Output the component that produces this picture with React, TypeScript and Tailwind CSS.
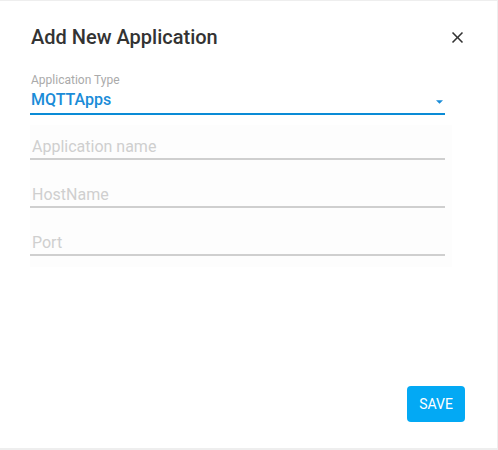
import React from "react";

const fields = ["Application name", "HostName", "Port"];

export default function App() {
  return (
    <div className="h-[450px] w-[498px] bg-[#eeeeee] pt-px font-['Roboto',sans-serif]">
      <div className="flex h-[447px] w-[497px] flex-col bg-white">
        {/* header */}
        <div className="flex items-center justify-between pl-[31px] pr-[30px] pt-[22px]">
          <h2 className="text-[20px] font-medium leading-[28px] text-[#333333]">Add New Application</h2>
          <svg viewBox="0 0 24 24" className="h-[19px] w-[19px] fill-[#333333]">
            <path d="M19 6.41L17.59 5 12 10.59 6.41 5 5 6.41 10.59 12 5 17.59 6.41 19 12 13.41 17.59 19 19 17.59 13.41 12z" />
          </svg>
        </div>

        {/* select */}
        <div className="ml-[30px] mt-[22px] w-[415px] border-b-2 border-[#0a8bd6] pb-[3px]">
          <div className="pl-px text-[12px] leading-[14px] text-[#aaaaaa]">Application Type</div>
          <div className="mt-[3px] flex h-[20px] items-center justify-between">
            <span className="pl-px text-[16px] font-medium leading-[20px] text-[#1a8cd8]">MQTTApps</span>
            <svg viewBox="0 0 8 4" className="mr-[2px] mt-[4px] h-[4px] w-[7px] fill-[#1a8cd8]">
              <polygon points="0,0 8,0 4,4" />
            </svg>
          </div>
        </div>

        {/* text fields */}
        <div className="ml-[30px] mt-[10px] flex w-[422px] flex-col gap-[24px] bg-[#fdfdfd] pb-[11px] pt-[11px]">
          {fields.map((f) => (
            <div key={f} className="w-[415px] border-b-2 border-[#cfcfcf]">
              <input
                placeholder={f}
                className="block h-[22px] w-full bg-transparent pl-[2px] text-[16px] text-[#333] outline-none placeholder:text-[#cfcfcf]"
              />
            </div>
          ))}
        </div>

        <div className="mt-auto flex justify-end pb-[26px] pr-[32px]">
          <button className="flex h-[36px] w-[58px] items-center justify-center rounded-[4px] bg-[#03a9f4] text-[14px] font-normal text-white">
            SAVE
          </button>
        </div>
      </div>
    </div>
  );
}
